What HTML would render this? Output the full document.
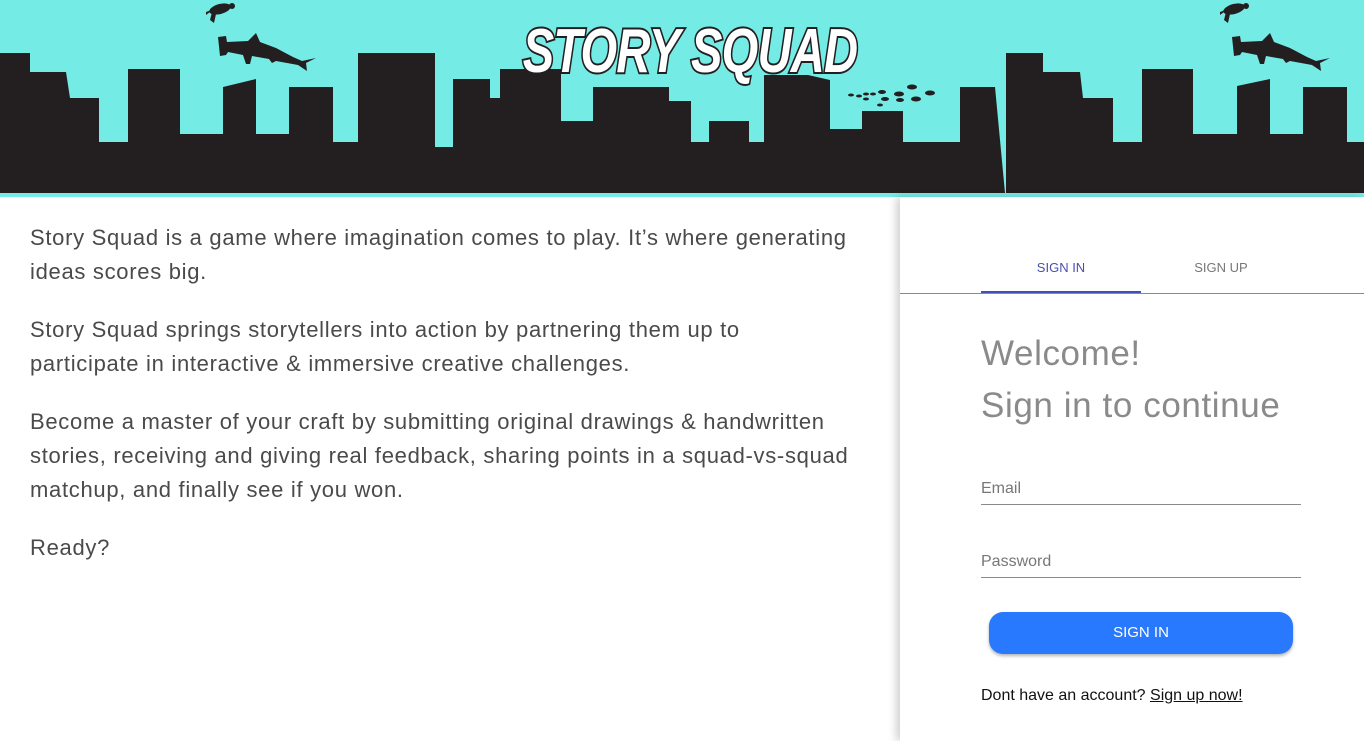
<!DOCTYPE html>
<html><head><meta charset="utf-8"><style>
html,body{margin:0;padding:0;width:1364px;height:741px;overflow:hidden;background:#fff;font-family:"Liberation Sans",sans-serif}
.hdr{position:absolute;left:0;top:0;width:1364px;height:197px}
.left{position:absolute;left:30px;top:221px;width:860px;color:#4a4a4a;font-size:22px;line-height:34px;font-weight:300;letter-spacing:0.7px;white-space:nowrap}
.left p{margin:0 0 24px 0}
.panel{position:absolute;left:900px;top:197px;width:464px;height:544px;background:#fff;box-shadow:-4px 0 8px rgba(0,0,0,0.18)}
.tab{position:absolute;top:63px;font-size:13px;width:160px;text-align:center}
.gl{position:absolute;left:0;top:96px;width:464px;height:1px;background:#8a8a8a}
.ul{position:absolute;left:81px;top:94px;width:160px;height:2px;background:#3f51b5}
.h{position:absolute;left:81px;color:#8a8a8a;font-size:35px;letter-spacing:0.6px}
.lbl{position:absolute;left:81px;font-size:16px;color:#777}
.line{position:absolute;left:81px;width:320px;height:1px;background:#8a8a8a}
.btn{position:absolute;left:89px;top:415px;width:304px;height:42px;border-radius:14px;background:#2979ff;color:#fff;font-size:15px;text-align:center;line-height:42px;box-shadow:0 2px 3px rgba(0,0,0,0.3)}
.foot{position:absolute;left:81px;top:490px;font-size:16px;color:#111}
.foot u{text-decoration:underline}
</style></head><body>
<svg class="hdr" width="1364" height="197" viewBox="0 0 1364 197">
<rect width="1364" height="197" fill="#75ebe6"/>
<polygon fill="#231f20" points="0,53 30,53 30,72 66,72 70,98 99,98 99,142 128,142 128,69 180,69 180,134 223,134 223,87 256,79 256,134 289,134 289,87 333,87 333,142 358,142 358,53 435,53 435,147 453,147 453,79 490,79 490,98 500,98 500,69 561,69 561,121 593,121 593,87 669,87 669,101 691,101 691,142 709,142 709,121 749,121 749,142 764,142 764,75 808,75 830,80 830,129 862,129 862,111 903,111 903,142 960,142 960,87 995,87 1005,193 0,193"/>
<polygon fill="#231f20" points="1006,193 1006,53 1043,53 1043,72 1080,72 1083,98 1113,98 1113,142 1142,142 1142,69 1193,69 1193,134 1237,134 1237,86 1270,79 1270,134 1303,134 1303,87 1347,87 1347,142 1364,142 1364,193"/>
<g id="sh" fill="#231f20">
<path d="M218,37 L226,36 L227,42 L248,41 L256,33 L260,42 L276,48 L293,57 L302,61 L316,58 L306,63 L307,71 L298,65 L276,61 L272,63 L269,59 L252,56 L250,64 L246,64 L243,55 L228,52 L226,55 L220,56 Z"/>
<ellipse cx="220" cy="9" rx="11" ry="5" transform="rotate(-15 220 9)"/>
<circle cx="232" cy="6" r="3"/>
<path d="M212,12 L210,20 L214,23 L216,14 Z M206,12 L214,9 L206,15 Z"/>
</g>
<use href="#sh" transform="translate(1014,0)"/>
<g fill="#231f20">
<ellipse cx="851" cy="95" rx="3" ry="1.5"/><ellipse cx="859" cy="96" rx="3" ry="1.5"/><ellipse cx="866" cy="94" rx="3" ry="1.5"/><ellipse cx="873" cy="94" rx="3" ry="1.5"/><ellipse cx="866" cy="99" rx="3" ry="1.5"/><ellipse cx="882" cy="92" rx="4" ry="2"/><ellipse cx="885" cy="99" rx="4" ry="2"/><ellipse cx="880" cy="105" rx="3" ry="1.5"/><ellipse cx="899" cy="94" rx="5" ry="2.5"/><ellipse cx="900" cy="100" rx="4" ry="2"/><ellipse cx="912" cy="87" rx="5" ry="2.5"/><ellipse cx="916" cy="99" rx="5" ry="2.5"/><ellipse cx="930" cy="93" rx="5" ry="2.5"/>
</g>
<text x="690" y="72" text-anchor="middle" font-family="Liberation Sans" font-weight="bold" font-style="italic" font-size="62" fill="#fff" stroke="#231f20" stroke-width="4" paint-order="stroke" transform="translate(690 0) scale(0.76 1) translate(-690 0)" letter-spacing="-1">STORY SQUAD</text>
</svg>
<div class="left">
<p>Story Squad is a game where imagination comes to play. It’s where generating<br>ideas scores big.</p>
<p>Story Squad springs storytellers into action by partnering them up to<br>participate in interactive &amp; immersive creative challenges.</p>
<p>Become a master of your craft by submitting original drawings &amp; handwritten<br>stories, receiving and giving real feedback, sharing points in a squad-vs-squad<br>matchup, and finally see if you won.</p>
<p>Ready?</p>
</div>
<div class="panel">
<div class="tab" style="left:81px;color:#4a4fb0">SIGN IN</div>
<div class="tab" style="left:241px;color:#777">SIGN UP</div>
<div class="gl"></div><div class="ul"></div>
<div class="h" style="top:137px">Welcome!</div>
<div class="h" style="top:189px">Sign in to continue</div>
<div class="lbl" style="top:283px">Email</div>
<div class="line" style="top:307px"></div>
<div class="lbl" style="top:356px">Password</div>
<div class="line" style="top:380px"></div>
<div class="btn">SIGN IN</div>
<div class="foot">Dont have an account? <u>Sign up now!</u></div>
</div>
</body></html>
